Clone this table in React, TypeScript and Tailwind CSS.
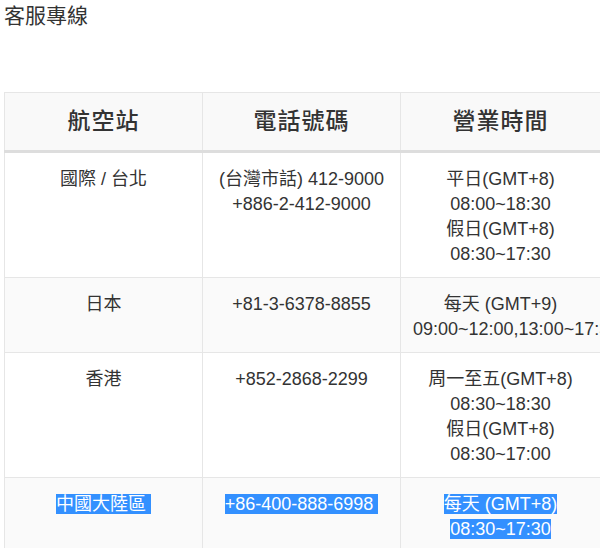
import React from 'react';

type Row = {
  station: string[];
  phone: string[];
  hours: string[];
  selected?: boolean;
};

const rows: Row[] = [
  {
    station: ['國際 / 台北'],
    phone: ['(台灣市話) 412-9000', '+886-2-412-9000'],
    hours: ['平日(GMT+8)', '08:00~18:30', '假日(GMT+8)', '08:30~17:30'],
  },
  {
    station: ['日本'],
    phone: ['+81-3-6378-8855'],
    hours: ['每天 (GMT+9)', '09:00~12:00,13:00~17:30'],
  },
  {
    station: ['香港'],
    phone: ['+852-2868-2299'],
    hours: ['周一至五(GMT+8)', '08:30~18:30', '假日(GMT+8)', '08:30~17:00'],
  },
  {
    station: ['中國大陸區 '],
    phone: ['+86-400-888-6998 '],
    hours: ['每天 (GMT+8)', '08:30~17:30'],
    selected: true,
  },
];

const Lines: React.FC<{ lines: string[]; selected?: boolean }> = ({ lines, selected }) => (
  <>
    {lines.map((line, i) => (
      <div key={i} className="whitespace-nowrap">
        <span className={selected ? 'bg-[#3390ff] text-white whitespace-pre' : 'whitespace-pre'}>{line}</span>
      </div>
    ))}
  </>
);

export default function App() {
  return (
    <div
      className="w-[600px] h-[548px] overflow-hidden bg-white pl-1 text-[#333]"
      style={{ fontFamily: '"Liberation Sans", Arial, "Noto Sans CJK TC", sans-serif' }}
    >
      <h1 className="text-[21px] leading-[32px] font-normal">客服專線</h1>

      <table className="mt-[60px] table-fixed border-collapse w-[596px] text-center text-[18px] leading-[25px]">
        <colgroup>
          <col className="w-[198px]" />
          <col className="w-[198px]" />
          <col className="w-[200px]" />
        </colgroup>
        <thead>
          <tr className="bg-[#f9f9f9]">
            {['航空站', '電話號碼', '營業時間'].map((h) => (
              <th
                key={h}
                className="h-[59px] border border-[#e6e6e6] border-b-[3px] border-b-[#dddddd] text-[23px] font-medium tracking-[1px] align-middle"
              >
                {h}
              </th>
            ))}
          </tr>
        </thead>
        <tbody>
          {rows.map((r, i) => (
            <tr key={i} className={i % 2 === 1 ? 'bg-[#fafafa]' : 'bg-white'}>
              <td className="border border-[#e6e6e6] px-3 pt-[14px] pb-[10px] align-top">
                <Lines lines={r.station} selected={r.selected} />
              </td>
              <td className="border border-[#e6e6e6] px-3 pt-[14px] pb-[10px] align-top">
                <Lines lines={r.phone} selected={r.selected} />
              </td>
              <td className="border border-[#e6e6e6] px-3 pt-[14px] pb-[10px] align-top">
                <Lines lines={r.hours} selected={r.selected} />
              </td>
            </tr>
          ))}
        </tbody>
      </table>
    </div>
  );
}
